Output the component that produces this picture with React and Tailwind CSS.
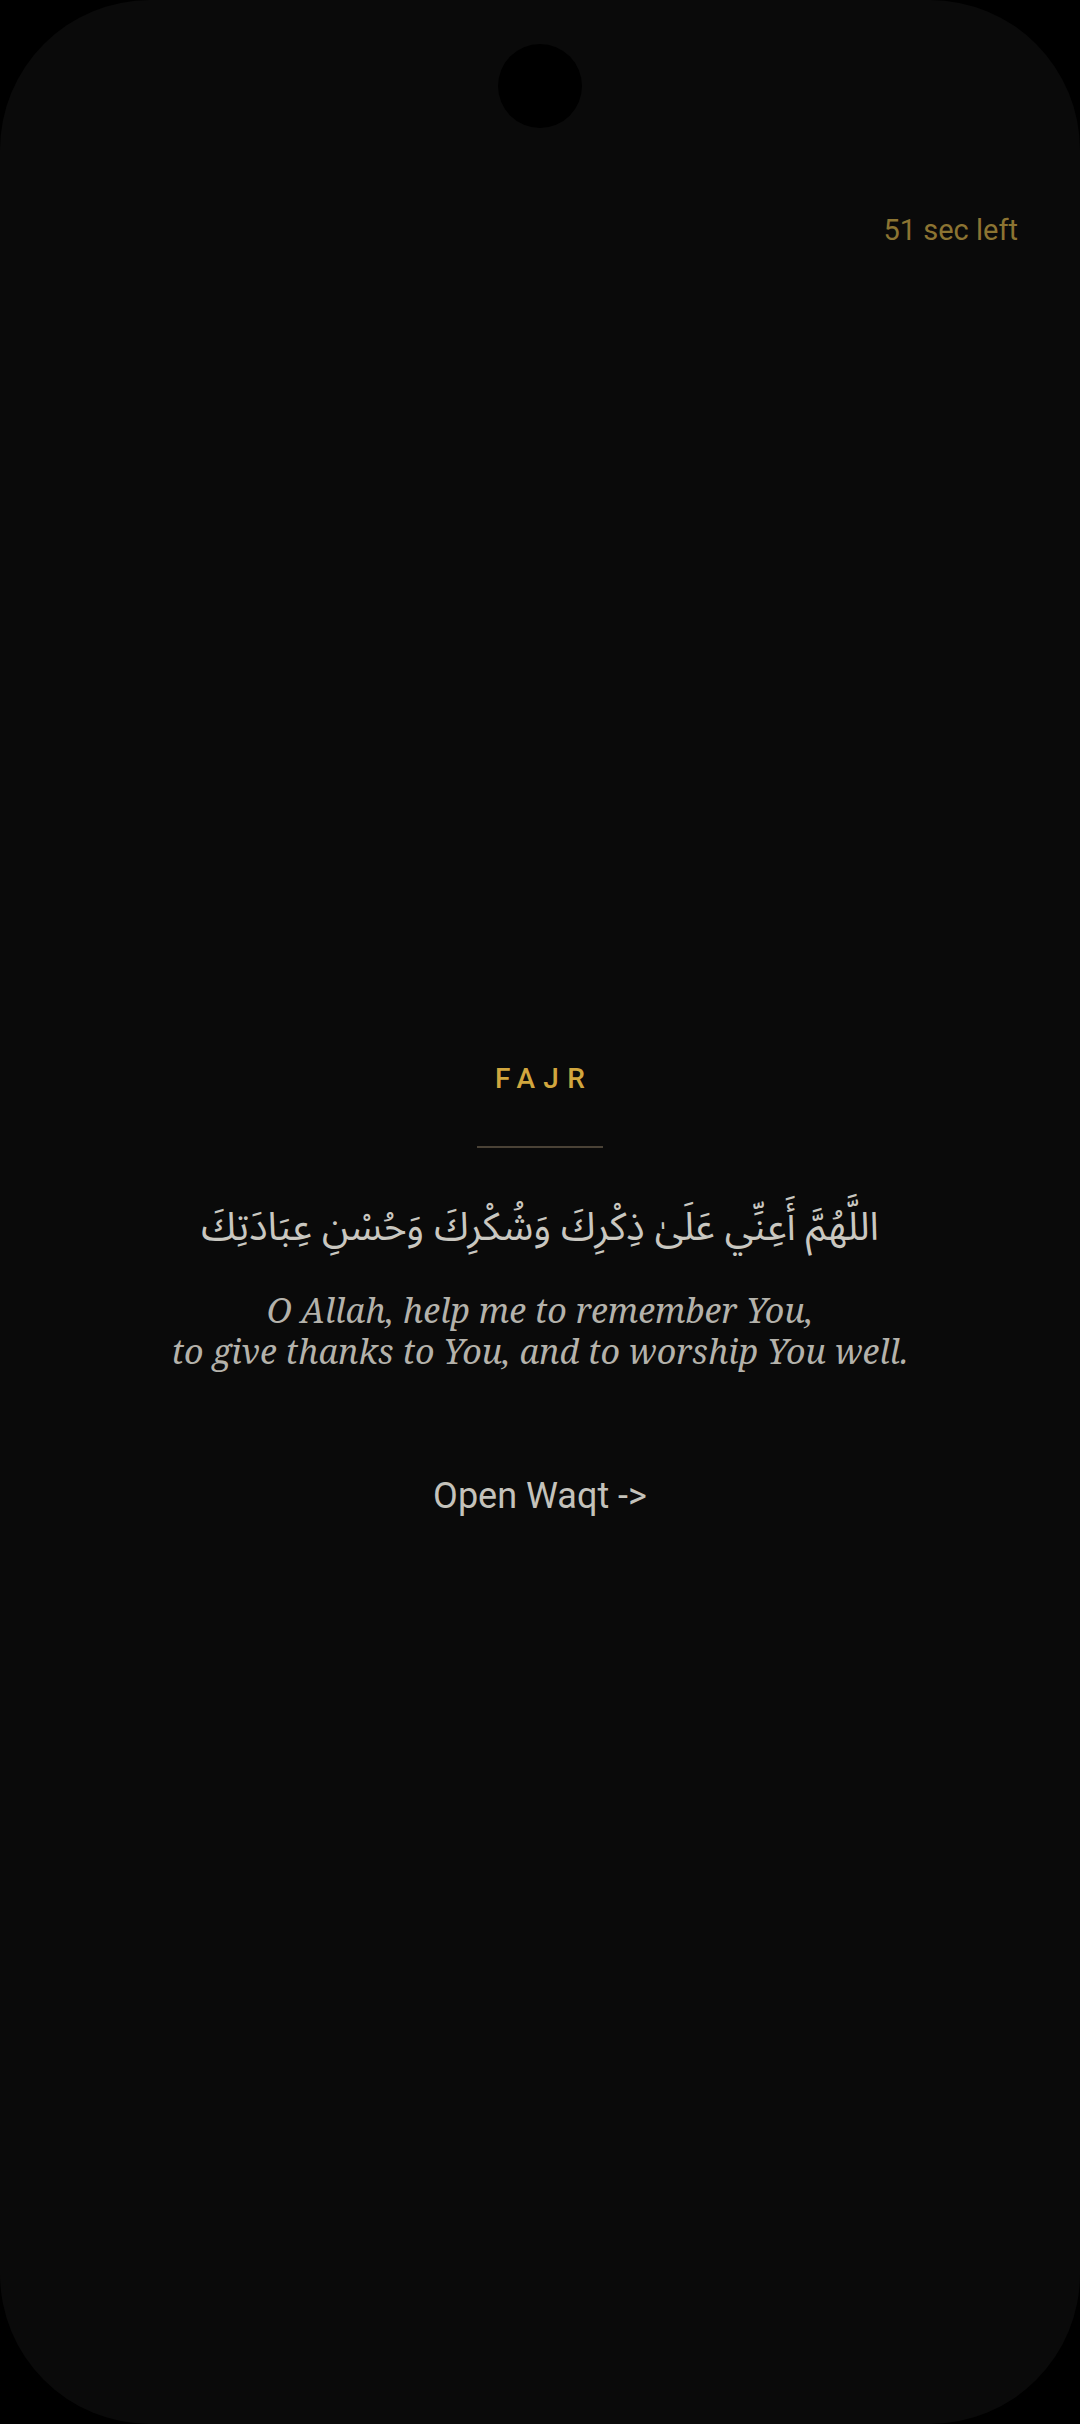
import React from "react";

export default function App() {
  const arabic = "اللَّهُمَّ أَعِنِّي عَلَىٰ ذِكْرِكَ وَشُكْرِكَ وَحُسْنِ عِبَادَتِكَ";
  return (
    <div className="w-full h-[2424px] bg-black">
      <div className="relative h-full rounded-[150px] bg-[#0a0a0a] flex flex-col font-['Roboto',sans-serif]">
        {/* camera cutout */}
        <div className="absolute left-1/2 top-[44px] -translate-x-1/2 w-[84px] h-[84px] rounded-full bg-black" />

        <div className="flex justify-end pt-[212px] pr-[62px]">
          <span className="text-[29px] leading-[36px] text-[#8c7432]">51 sec left</span>
        </div>

        <div className="flex flex-col items-center pt-[814px]">
          <div className="text-[28px] leading-[34px] font-medium tracking-[0.3em] pl-[0.3em] text-[#d1a63e]">FAJR</div>
          <div className="mt-[50px] w-[126px] h-[2px] bg-[#4a4236]" />
          <div dir="rtl" className="mt-[50px] text-[39px] leading-[60px] text-[#c9c7c0] font-['Noto_Sans_Arabic','Noto_Naskh_Arabic','DejaVu_Sans',sans-serif]">
            {arabic}
          </div>
          <p className="mt-[32px] text-center italic text-[34px] leading-[41px] text-[#b4b2ab] font-['Noto_Serif','DejaVu_Serif',serif]">
            O Allah, help me to remember You,
            <br />
            to give thanks to You, and to worship You well.
          </p>
          <button className="mt-[102px] text-[36px] leading-[44px] text-[#c4c2bb]">Open Waqt -&gt;</button>
        </div>
      </div>
    </div>
  );
}
